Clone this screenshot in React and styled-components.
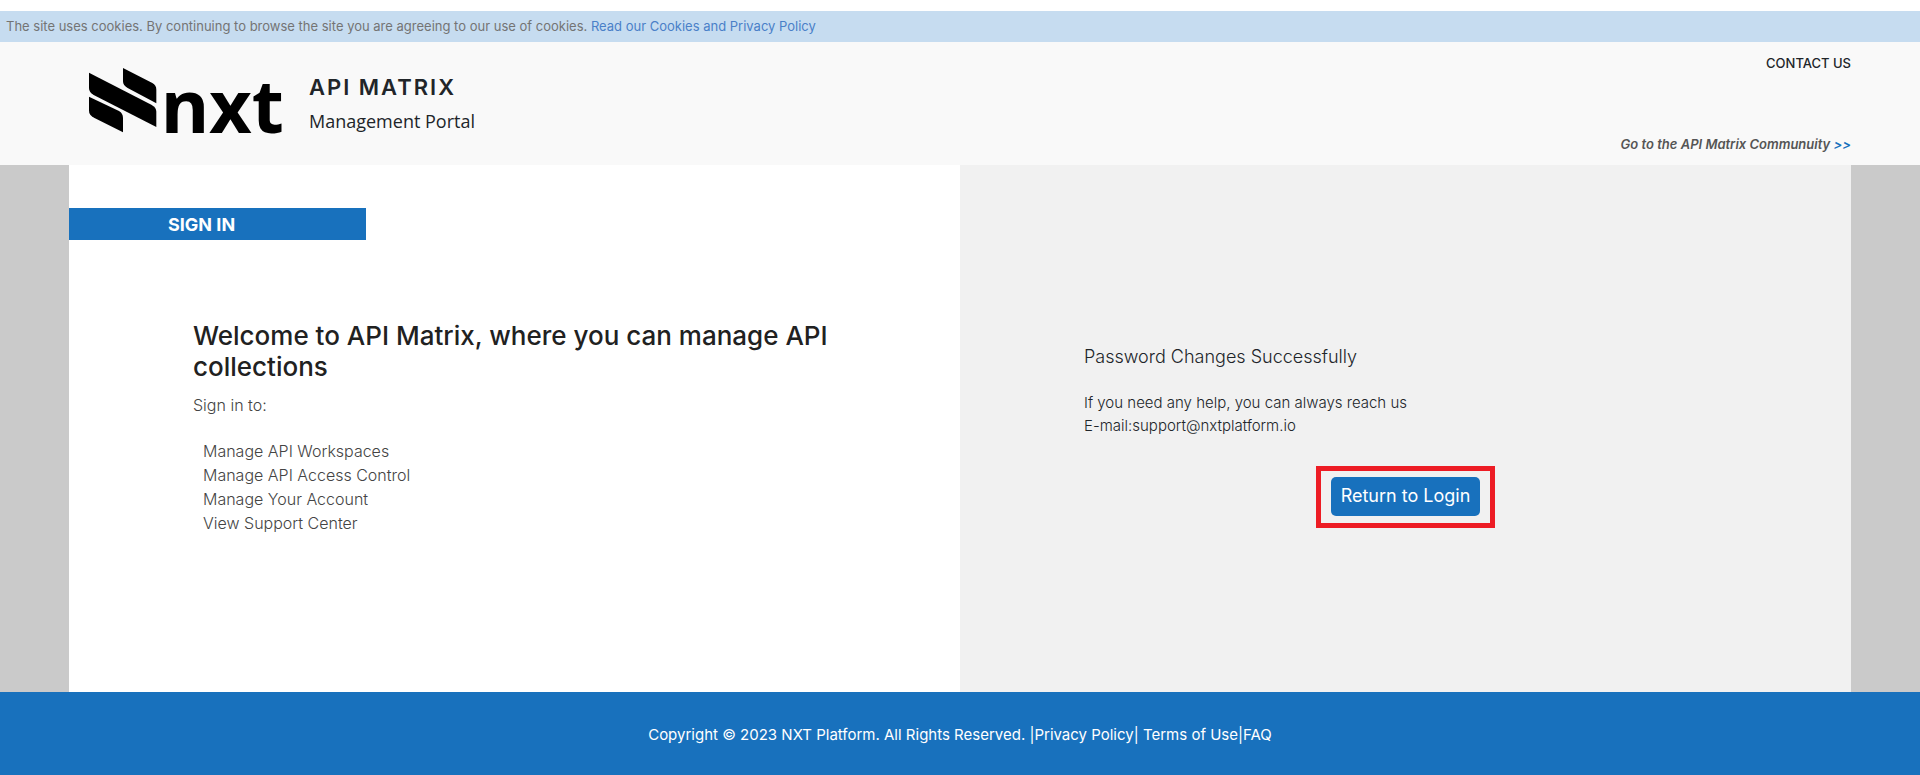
import React from "react";
import styled, { createGlobalStyle } from "styled-components";

const GlobalStyle = createGlobalStyle`
  *, *::before, *::after { box-sizing: border-box; }
  body { margin: 0; background: #fff; color: #212529; font-family: Inter, "Liberation Sans", sans-serif; font-size: 16px; line-height: 24px; }
  h1, h2, p, ul { margin: 0; padding: 0; font-weight: inherit; }
  a { color: inherit; text-decoration: none; }
`;

const Page = styled.div`
  display: flex;
  flex-direction: column;
  min-height: 100vh;
  padding-top: 11px;
`;

const CookieBar = styled.div`
  background: #c6dcf0;
  color: #747474;
  padding: 3px 6px 4px;
  font-size: 13px;
`;

const CookieLink = styled.a`
  color: #4a80c8;
`;

const Header = styled.header`
  display: flex;
  justify-content: space-between;
  background: #f9f9f9;
  min-height: 123px;
  padding: 9px 69px 9px 89px;
`;

const Brand = styled.a`
  display: flex;
  align-items: flex-start;
  gap: 20px;
`;

const Logo = styled.svg`
  display: block;
  width: 200px;
  height: 102px;
  margin-top: 3px;
  flex: none;
`;

const LogoText = styled.text`
  font-family: "Noto Sans", sans-serif;
  font-size: 74px;
  font-weight: 700;
`;

const BrandText = styled.div`
  padding-top: 23px;
`;

const Product = styled.h1`
  font-size: 22px;
  font-weight: 600;
  line-height: 26px;
  letter-spacing: 2px;
`;

const Tagline = styled.p`
  margin-top: 8px;
  font-family: "Open Sans", sans-serif;
  font-size: 18px;
  font-weight: 400;
  line-height: 26px;
`;

const HeaderLinks = styled.nav`
  display: flex;
  flex-direction: column;
  justify-content: space-between;
  align-items: flex-end;
  font-size: 13px;
  font-weight: 500;
`;

const CommunityLink = styled.a`
  color: #555;
  font-style: italic;
  font-weight: 600;

  span { color: #1871bd; }
`;

const Main = styled.main`
  flex: 1;
  display: grid;
  grid-template-columns: 1fr 1fr;
  padding: 0 69px;
  background: #cacaca;
`;

const Panel = styled.section`
  background: ${(p) => (p.$shaded ? "#f1f1f1" : "#fff")};
  padding-top: ${(p) => (p.$shaded ? 180 : 43)}px;
`;

const SignInTab = styled.h2`
  width: 33.333%;
  background: #1871bd;
  color: #fff;
  font-size: 18px;
  font-weight: 700;
  line-height: 30px;
  padding: 2px 0 0 99px;
`;

const PanelBody = styled.div`
  padding: 0 100px 0 124px;
`;

const Welcome = styled(PanelBody)`
  padding-top: 80px;
  color: #444;
  font-weight: 300;
`;

const WelcomeTitle = styled.h2`
  color: #212121;
  font-size: 26px;
  font-weight: 500;
  line-height: 31px;
  margin-bottom: 11px;
`;

const FeatureList = styled.ul`
  list-style: none;
  margin-top: 22px;
  padding-left: 10px;
`;

const Message = styled.h2`
  font-size: 18px;
  font-weight: 300;
`;

const Help = styled.p`
  margin-top: 22px;
  font-size: 15px;
  font-weight: 300;
  line-height: 23px;
`;

const ButtonRow = styled.div`
  display: flex;
  justify-content: center;
  margin-top: 29px;
`;

const Highlight = styled.div`
  border: 5px solid #ed1c24;
  padding: 6px 10px 7px;
`;

const Button = styled.button`
  display: block;
  border: 0;
  border-radius: 5px;
  background: #1871bd;
  color: #fff;
  font: 400 18px/24px Inter, "Liberation Sans", sans-serif;
  padding: 7px 10px 8px;
  cursor: pointer;
`;

const Footer = styled.footer`
  background: #1871bd;
  color: #fff;
  text-align: center;
  font-size: 15px;
  padding: 31px 16px 28px;
`;

const features = [
  "Manage API Workspaces",
  "Manage API Access Control",
  "Manage Your Account",
  "View Support Center",
];

function NxtLogo() {
  return (
    <Logo viewBox="0 -14 200 102" role="img" aria-label="nxt">
      <g transform="scale(0.3333)">
        <path d="M102 0 L190 45 Q202 51 202 65 V106 L116 60 Q102 52 102 40 Z" />
        <path d="M0 14 L187 110 Q202 118 202 131 V177 L14 81 Q0 73 0 60 Z" />
        <path d="M0 86 L90 129 Q102 136 102 150 V193 L15 149 Q0 141 0 128 Z" />
      </g>
      <LogoText x="72" y="65">nxt</LogoText>
    </Logo>
  );
}

export default function App() {
  return (
    <>
      <GlobalStyle />
      <Page>
        <CookieBar>
          The site uses cookies. By continuing to browse the site you are agreeing to our use of cookies.{" "}
          <CookieLink href="#cookies">Read our Cookies and Privacy Policy</CookieLink>
        </CookieBar>
        <Header>
          <Brand href="#home">
            <NxtLogo />
            <BrandText>
              <Product>API MATRIX</Product>
              <Tagline>Management Portal</Tagline>
            </BrandText>
          </Brand>
          <HeaderLinks>
            <a href="#contact">CONTACT US</a>
            <CommunityLink href="#community">
              Go to the API Matrix Communuity <span>&gt;&gt;</span>
            </CommunityLink>
          </HeaderLinks>
        </Header>
        <Main>
          <Panel>
            <SignInTab>SIGN IN</SignInTab>
            <Welcome>
              <WelcomeTitle>Welcome to API Matrix, where you can manage API collections</WelcomeTitle>
              <p>Sign in to:</p>
              <FeatureList>
                {features.map((f) => (
                  <li key={f}>{f}</li>
                ))}
              </FeatureList>
            </Welcome>
          </Panel>
          <Panel $shaded>
            <PanelBody>
              <Message>Password Changes Successfully</Message>
              <Help>
                If you need any help, you can always reach us
                <br />
                E-mail:<a href="mailto:support@nxtplatform.io">support@nxtplatform.io</a>
              </Help>
            </PanelBody>
            <ButtonRow>
              <Highlight>
                <Button type="button">Return to Login</Button>
              </Highlight>
            </ButtonRow>
          </Panel>
        </Main>
        <Footer>
          Copyright © 2023 NXT Platform. All Rights Reserved. |<a href="#privacy">Privacy Policy</a>|{" "}
          <a href="#terms">Terms of Use</a>|<a href="#faq">FAQ</a>
        </Footer>
      </Page>
    </>
  );
}
